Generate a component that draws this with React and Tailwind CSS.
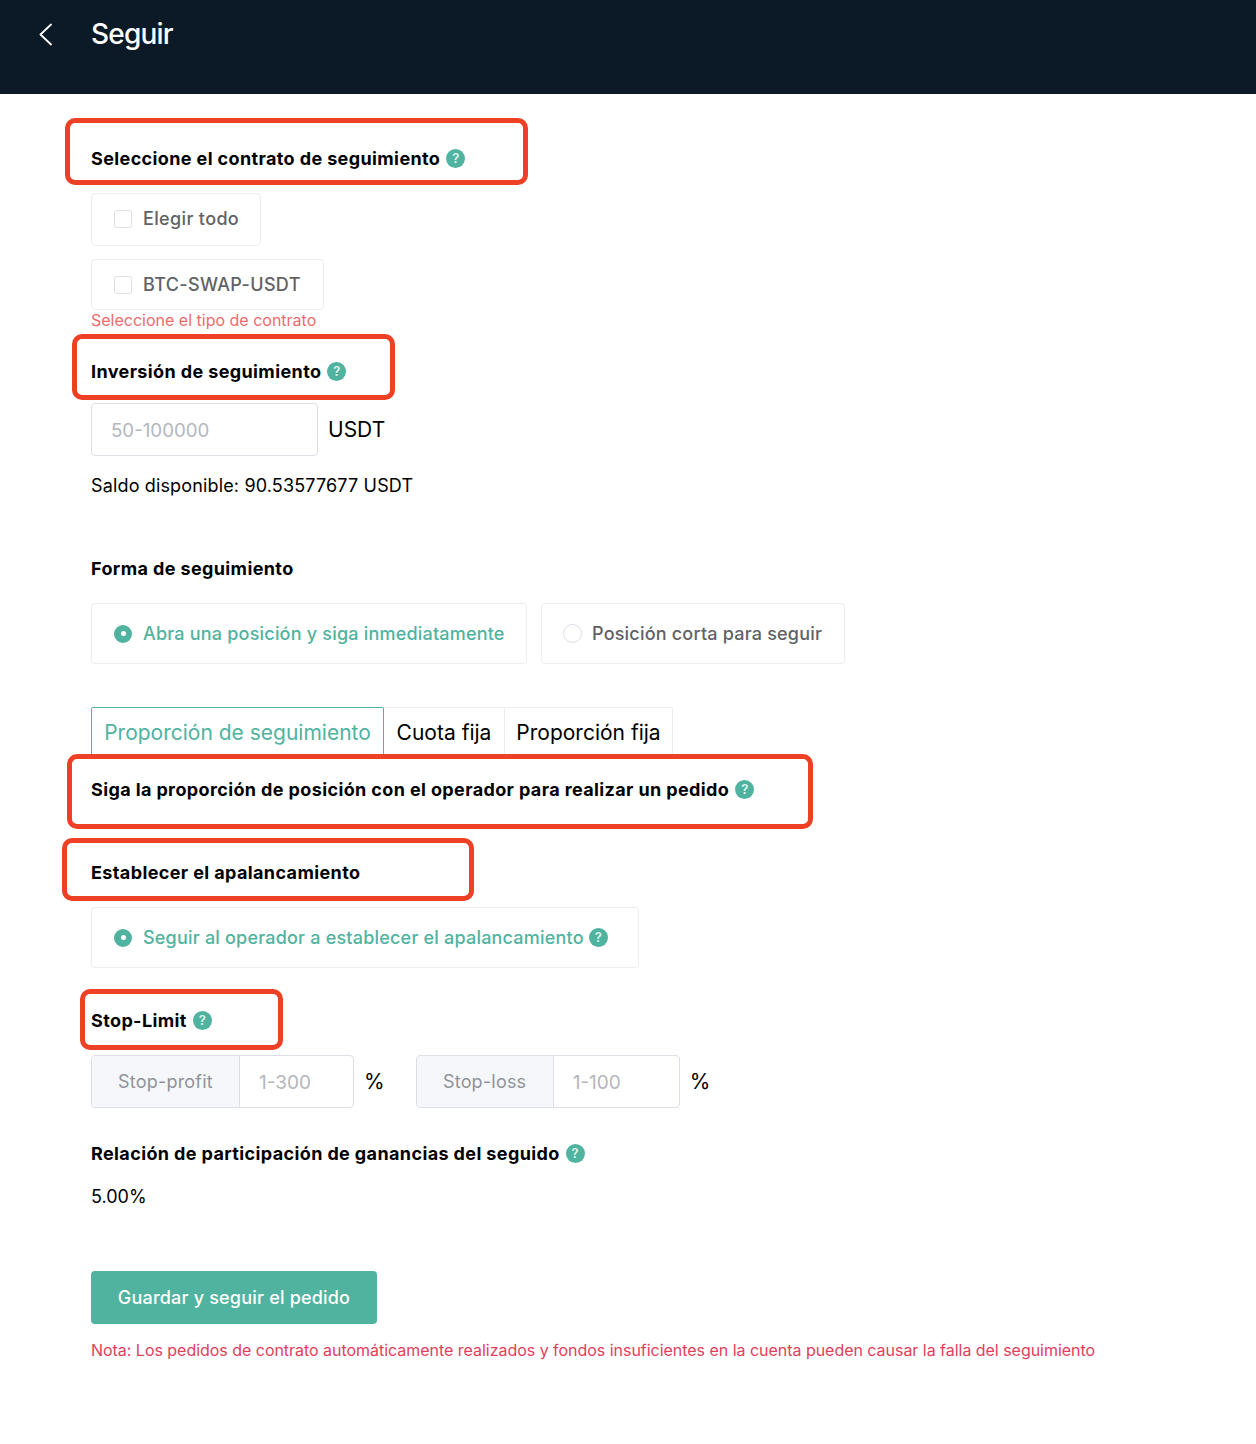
import React from 'react';

const Help = ({ className = 'ml-[6px]' }) => (
    <span className={`inline-flex h-[19px] w-[19px] shrink-0 items-center justify-center rounded-full bg-[#4fb3a0] text-[13px] font-semibold leading-none tracking-normal text-[#e0f3ee] ${className}`}>?</span>
);

const Heading = ({ children, help, mark, className }) => (
    <div className={`relative flex h-7 items-center text-[18px] font-bold tracking-[0.38px] text-black ${className}`}>
        <span>{children}</span>
        {help && <Help />}
        {mark && <div className={`pointer-events-none absolute rounded-[10px] border-[5px] border-[#ee4025] ${mark}`}></div>}
    </div>
);

const Check = ({ label, className }) => (
    <div className={`flex items-center rounded-[4px] border border-[#ebedf2] pl-[22px] text-[18px] font-medium tracking-[0.35px] text-[#606266] ${className}`}>
        <span className="mr-[11px] h-[18px] w-[18px] rounded-[3px] border border-[#dcdfe6]"></span>
        {label}
    </div>
);

const Radio = ({ label, active, help, className }) => (
    <div className={`flex h-[61px] items-center rounded-[4px] border border-[#ebedf2] text-[18px] font-medium tracking-[0.2px] ${active ? 'pl-[22px] text-[#4fb3a0]' : 'pl-[21px] text-[#606266]'} ${className}`}>
        {active ? (
            <span className="mr-[11px] flex h-[18px] w-[18px] items-center justify-center rounded-full bg-[#4fb3a0]">
                <span className="h-[5px] w-[5px] rounded-full bg-white"></span>
            </span>
        ) : (
            <span className="mr-[10px] h-[19px] w-[19px] rounded-full border border-[#dcdfe6]"></span>
        )}
        {label}
        {help && <Help className="ml-[5px]" />}
    </div>
);

const StopInput = ({ label, placeholder, addonClass, inputClass }) => (
    <div className="flex items-center">
        <div className="flex h-[53px] overflow-hidden rounded-[4px] border border-[#dcdfe6] text-[18px] font-normal">
            <div className={`flex items-center justify-center border-r border-[#dcdfe6] bg-[#f5f7fa] tracking-[0.2px] text-[#909399] ${addonClass}`}>{label}</div>
            <div className={`flex items-center pl-[19px] pt-[3px] text-[19px] text-[#b4b6bc] ${inputClass}`}>{placeholder}</div>
        </div>
        <span className="ml-[10px] text-[21px] text-black">%</span>
    </div>
);

export default function App() {
    return (
        <div className="min-h-[1444px] bg-white font-['Inter',sans-serif]">
            <header className="h-[94px] bg-[#0c1a27] text-white">
                <div className="flex h-[68px] items-center">
                    <svg className="ml-[39px] h-[23px] w-[13px]" viewBox="0 0 13 23" fill="none" stroke="#fff" strokeWidth="1.8" strokeLinecap="round" strokeLinejoin="round">
                        <path d="M12 1.5 1.5 11.5 12 21.5" />
                    </svg>
                    <h1 className="ml-[39px] text-[28px] font-medium tracking-[-0.8px]">Seguir</h1>
                </div>
            </header>

            <main className="pl-[91px]">
                <Heading help mark="-left-[26px] -top-[26px] h-[67px] w-[463px]" className="mt-[50px]">Seleccione el contrato de seguimiento</Heading>
                <Check label="Elegir todo" className="mt-[21px] h-[53px] w-[170px] pb-[2px]" />
                <Check label="BTC-SWAP-USDT" className="mt-[13px] h-[51px] w-[233px]" />
                <p className="text-[16px] leading-[20px] text-[#ee6b6b]">Seleccione el tipo de contrato</p>

                <Heading help mark="-left-[19px] -top-[23px] h-[66px] w-[323px]" className="mt-[27px]">Inversión de seguimiento</Heading>
                <div className="mt-[18px] flex items-center">
                    <div className="flex h-[53px] w-[227px] items-center rounded-[4px] border border-[#dcdfe6] pl-[19px] pt-[4px] text-[18.7px] text-[#b4b6bc]">50-100000</div>
                    <span className="ml-[10px] text-[21px] text-black">USDT</span>
                </div>
                <p className="mt-[16px] text-[18px] leading-[28px] tracking-[0.15px] text-black">Saldo disponible: 90.53577677 USDT</p>

                <Heading className="mt-[54px]">Forma de seguimiento</Heading>
                <div className="mt-[21px] flex gap-[14px]">
                    <Radio active label="Abra una posición y siga inmediatamente" className="w-[436px]" />
                    <Radio label="Posición corta para seguir" className="w-[304px]" />
                </div>

                <div className="mt-[43px] flex h-[50px] text-[21px] text-black">
                    <div className="flex w-[293px] items-center justify-center rounded-t-[2px] border border-b-0 border-[#4fb3a0] text-[#4fb3a0]">Proporción de seguimiento</div>
                    <div className="flex w-[121px] items-center justify-center border-t border-r border-[#ebedf2]">Cuota fija</div>
                    <div className="flex w-[168px] items-center justify-center rounded-tr-[2px] border-t border-r border-[#ebedf2]">Proporción fija</div>
                </div>

                <Heading help mark="-left-[24px] -top-[21px] h-[75px] w-[746px]" className="mt-[18px]">Siga la proporción de posición con el operador para realizar un pedido</Heading>
                <Heading mark="-left-[29px] -top-[20px] h-[63px] w-[412px]" className="mt-[55px]">Establecer el apalancamiento</Heading>
                <Radio active help label="Seguir al operador a establecer el apalancamiento" className="mt-[21px] w-[548px]" />

                <Heading help mark="-left-[11px] -top-[17px] h-[61px] w-[203px]" className="mt-[38px]">Stop-Limit</Heading>
                <div className="mt-[21px] flex gap-[31px]">
                    <StopInput label="Stop-profit" placeholder="1-300" addonClass="w-[148px]" inputClass="w-[113px]" />
                    <StopInput label="Stop-loss" placeholder="1-100" addonClass="w-[137px]" inputClass="w-[125px]" />
                </div>

                <Heading help className="mt-[31px]">Relación de participación de ganancias del seguido</Heading>
                <p className="mt-[16px] text-[18px] leading-[28px] text-black">5.00%</p>

                <button className="mt-[60px] flex h-[53px] w-[286px] items-center justify-center rounded-[4px] bg-[#4fb3a0] text-[18px] font-medium tracking-[0.2px] text-white">Guardar y seguir el pedido</button>
                <p className="mt-[14px] text-[16px] leading-[24px] tracking-[-0.03px] text-[#e2405a]">Nota: Los pedidos de contrato automáticamente realizados y fondos insuficientes en la cuenta pueden causar la falla del seguimiento</p>
            </main>
        </div>
    );
}
